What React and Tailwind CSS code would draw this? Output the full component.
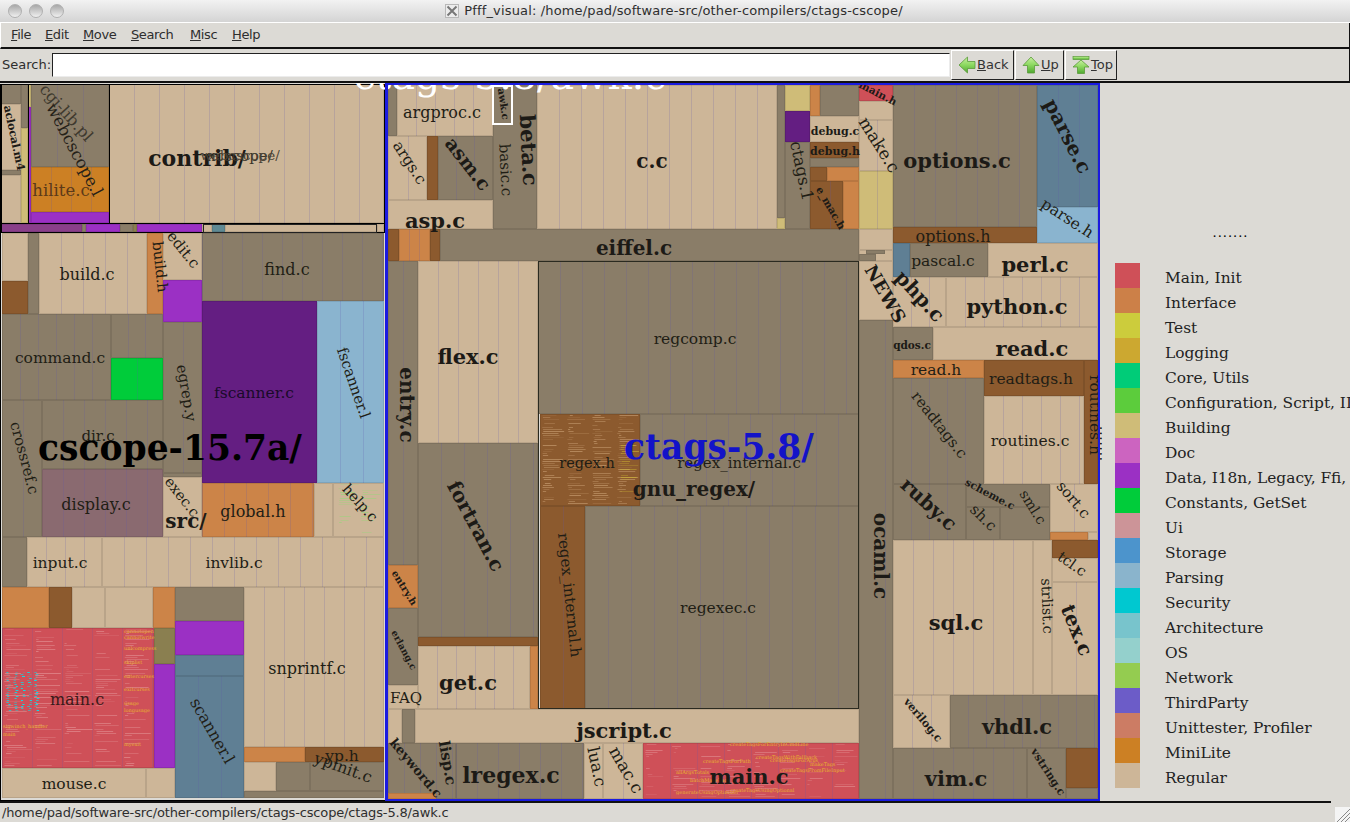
import React from "react";

const T = "#cdb698", G = "#8a7d68", B = "#8c5a2e", O = "#cc8448", P = "#9b30c4", DP = "#641e82", LB = "#8ab4cf", SL = "#5f7f94", GR = "#00cc3a", HO = "#cc8024", R = "#cf5058", Y = "#cfbc78", DI = "#8a6a70", OL = "#8a7f50", MP = "#8a3f8a", TE = "#5f8a94";

const rects = [
  [1,84,21,104,G],[1,104,21,170,T],[1,170,21,175,G],[1,175,21,223,T],[21,84,28,128,G],[21,128,28,223,Y],[28,84,31,107,Y],[28,107,31,223,P],
  [31,84,109,167,G,26],[31,167,109,212,HO,20],[31,212,109,223,P],[109,84,384,223,T,25],
  [1,224,82,232,MP],[82,224,86,232,G],[86,224,120,232,P],[120,224,133,232,G],[133,224,137,232,OL],[137,224,202,232,P],[202,224,212,232,T],[212,224,225,232,TE],[225,224,377,232,T],[377,224,384,232,T],
  [2,233,28,281,T],[2,281,28,314,B],[28,233,39,314,G],[39,233,147,314,T,22],[147,233,163,314,O],[163,233,202,280,T],[163,280,202,322,P],[202,233,384,301,G,20],
  [2,314,111,400,G,18],[111,314,163,358,G,17],[111,358,163,400,GR,26],[163,322,202,473,G,20],[163,473,202,477,G],[202,301,317,483,DP],[317,301,384,483,LB,23],
  [2,400,42,537,G,21],[42,400,163,469,G,21],[42,469,163,537,DI,21],[163,477,202,537,T],[202,483,314,537,O,22],[314,483,333,537,T],[333,483,384,537,T],
  [2,537,27,587,G],[27,537,102,587,T,19],[102,537,384,587,T,22],
  [2,587,49,628,O],[49,587,72,628,B],[72,587,105,628,T],[105,587,153,628,T],[153,587,175,628,O],[175,587,244,621,G],[175,621,244,655,P],[175,655,244,676,SL],[175,676,244,798,SL,23],
  [2,628,154,768,R,30],[154,628,175,664,OL],[154,664,175,768,P],[2,768,146,798,T],[146,768,175,798,T],
  [244,587,384,747,T,20],[244,747,305,762,O],[305,747,384,762,B],[244,762,276,791,T],[276,762,310,791,G],[310,762,384,791,G],[244,791,384,798,G],
  [388,85,397,136,G],[397,85,493,136,T,19],[493,85,537,229,G],[438,136,493,200,G,18],[388,136,427,200,T,20],[427,136,438,200,B],[388,200,493,229,T],
  [537,85,777,229,T,22],[777,85,785,218,G],[777,218,785,229,Y],[785,85,810,111,Y],[785,111,810,142,DP],[785,142,810,229,G],[810,85,820,116,O],[820,85,859,116,G],[810,116,859,142,T],[810,142,859,158,B],[810,158,859,167,G],
  [810,167,827,181,B],[827,167,859,181,O],[810,181,843,229,B,20],[843,181,859,229,O],
  [859,85,893,101,R],[859,101,893,120,T],[859,120,893,171,T,18],[859,171,893,229,Y,18],[859,229,893,250,T],[859,250,893,261,T],[866,250,885,254,G],[859,254,876,261,G],[859,261,893,320,T],
  [388,229,399,261,B],[399,229,430,261,O,10],[430,229,440,261,B],[440,229,859,261,G],
  [388,261,418,565,G,15],[388,565,418,608,O],[388,608,418,685,G],[388,685,418,709,T],[418,261,538,443,T,20],[418,443,538,637,G,23],[418,637,538,646,B],[418,646,530,709,T,19],[530,646,538,709,O],
  [538,261,859,414,G,22],[540,414,640,506,B],[640,414,859,506,G,22],[540,506,585,709,B,23],[585,506,859,709,G,23],
  [388,709,402,743,T],[402,709,415,743,G],[415,709,859,743,T],
  [388,743,456,799,G,16],[388,793,436,799,O],[456,743,584,799,G,21],[584,743,603,799,T],[603,743,643,799,T,20],[643,743,859,799,R,27],
  [859,320,893,799,G,26],
  [893,85,1037,227,G,21],[893,227,1037,243,B],[1037,85,1098,207,SL,21],[1037,207,1098,243,LB],
  [893,243,910,277,SL],[910,243,988,277,G],[988,243,1098,277,T],[893,277,946,327,T,18],[946,277,1098,327,T,19],[893,327,933,360,G],[933,327,1098,360,T],
  [893,360,984,378,O],[893,378,984,484,G,18],[984,360,1084,396,B],[1084,360,1098,484,B],[984,396,1084,484,T,19],
  [893,484,966,540,G,18],[966,484,1050,507,G],[966,507,1000,540,G],[1000,507,1050,540,G],[1050,484,1098,532,T,24],[1050,532,1088,540,O],[1088,532,1098,540,T],
  [893,540,1033,695,T,20],[1033,540,1052,695,T],[1052,540,1098,558,B],[1052,558,1098,582,T],[1052,582,1098,695,T,24],
  [893,695,950,748,T,19],[950,695,1098,748,G,18],[893,748,1027,799,G,20],[1027,748,1066,799,G],[1066,748,1098,788,B],[1066,788,1098,799,G],
];

const frames = [
  [0,84,386,801,"border-black"],[1,84,385,224,"border-black"],[28,84,110,224,"border-black"],[1,223,385,233,"border-black"],[203,224,377,233,"border-[#222]"],[538,261,859,709,"border-[#2a2a20]"],
  [492,85,513,125,"border-white border-2"],
];

const labels = [
  ["aclocal.m4",14,138,11,1,78],["cgi-lib.pl",66,113,16,0,48,"#3e392e"],["webcscope.l",74,150,16.5,0,62,"#252118"],["hilite.c",61,191,16.5,0,0,"#5c3a18"],
  ["contrib/",197,158,22,1,0],["xcscope/",240,156,15,0,0,"#3a342a"],["webcscope/",240,156,13.5,0,0,"#4a4436"],
  ["build.c",87,275,16],["build.h",160,267,14.5,0,84],["edit.c",183,250,15,0,51],["find.c",287,270,16],["command.c",60,359,15.5],
  ["egrep.y",186,393,15,0,80],["fscanner.c",254,394,15.5,0,0,"#1a0a2a"],["fscanner.l",353,383,15,0,71],["crossref.c",24,458,15,0,75],["dir.c",98,436,15],
  ["display.c",96,505,16],["exec.c",182,497,14.5,0,52],["global.h",253,512,16],["help.c",360,503,14.5,0,48],["input.c",60,564,15.5],["invlib.c",234,564,15.5],
  ["main.c",77,700,16,0,0,"#3a1a1a"],["scanner.l",212,731,16,0,60],["mouse.c",74,785,15.5],["snprintf.c",307,669,16],["yp.h",342,757,15.5],["ypinit.c",343,768,16,0,20],
  ["cscope-15.7a/",170,448,34.5,1,0,"#000"],["src/",186,521,20,1],
  ["argproc.c",442,113,16],["awk.c",503,104,10,1,82],["args.c",409,163,15.5,0,57],["asm.c",468,164,19,1,52],["basic.c",505,170,15,0,87],["beta.c",529,150,21,1,87],["asp.c",435,220,21,1],
  ["c.c",652,161,20,1],["ctags.1",801,171,16.5,0,78],["debug.c",835,131,11,1],["debug.h",835,151,11,1],["e_mac.h",831,208,10.5,1,60],["main.h",878,93,10.5,1,27],["make.c",879,145,17,0,58],
  ["options.c",957,160,21,1],["parse.c",1068,136,20,1,63],["parse.h",1067,219,15.5,0,33],["options.h",953,237,16],["eiffel.c",634,248,20,1],
  ["entry.c",407,405,20,1,90],["flex.c",468,356,21,1],["fortran.c",476,526,20,1,62],["get.c",468,682,21,1],["entry.h",404,588,10,1,58],["erlang.c",404,650,9.5,1,62],["FAQ",406,698,15],
  ["regcomp.c",695,340,15.5],["regex.h",587,463,14.5],["regex_internal.c",739,463,15],["gnu_regex/",694,489,20,1],["regex_internal.h",569,595,15,0,84],["regexec.c",718,609,15.5],
  ["jscript.c",624,730,21,1],["keyword.c",416,768,13,1,50],["lisp.c",447,763,15,1,80],["lregex.c",511,775,22,1],["lua.c",596,767,16.5,0,78],["mac.c",626,770,17,0,60],["main.c",749,776,21,1],
  ["ocaml.c",881,556,20,1,90],["NEWS",885,294,18,1,60],["php.c",920,296,20,1,47],["pascal.c",943,262,15.5],["perl.c",1035,264,21,1],["python.c",1017,306,21,1],["qdos.c",912,345,10.5,1],["read.c",1032,348,21,1],
  ["read.h",936,371,15.5],["readtags.h",1031,380,15.5],["routines.h",1094,415,15.5,0,90],["routines.c",1030,442,15.5],["readtags.c",939,425,15,0,52],["ruby.c",929,504,20,1,42],["scheme.c",990,494,10.5,1,28],
  ["sh.c",983,518,15,0,45],["sml.c",1033,507,14,0,58],["sort.c",1073,500,15,0,50],["tcl.c",1072,564,14.5,0,35],["strlist.c",1047,606,14.5,0,88],["tex.c",1077,630,20,1,68],["sql.c",956,622,21,1],
  ["verilog.c",923,720,11,1,50],["vhdl.c",1017,726,21,1],["vim.c",956,778,21,1],["vstring.c",1048,772,11,1,57],
];

const tiny = [
  ["cannotopen",124,629],["cannotwrite",124,635],["unlcompress",124,646],["skiplist",124,660],["entercurses",124,674],["exitcurses",124,687],["usage",124,701],["longusage",124,708],["myexit",124,742],
  ["sigwinch_handler",3,724],["main",3,732],
  ["createTagsForEntryInCmdLine",730,742],["createTagsForPath",703,759],["createTagsWithFallback",756,755],["createTagsForArgs",770,758],["createTagsFromFileInput",780,768],["allArgsTotals",676,770],["batchMakeTags",690,778],["generateUsingOptimizer",676,790],["createTagsUsingOptional",730,788],["makeTags",810,762],
];

function rng(seed) { let s = seed; return () => (s = (s * 1664525 + 1013904223) >>> 0) / 4294967296; }

function noise(x, y, w, h, col, lines, seed, cw, density) {
  const r = rng(seed);
  const out = [];
  for (let cx = 0; cx < w; cx += cw) {
    for (let ly = 0; ly < h; ly += 2) {
      if (r() > density) continue;
      const ll = 2 + r() * (cw - 6);
      out.push(<rect key={`${seed}-${cx}-${ly}`} x={cx + 2 + r() * 3} y={ly} width={ll} height={1} fill={col} opacity={0.1 + r() * lines} />);
    }
  }
  return <svg className="absolute pointer-events-none" width={w} height={h} style={{ left: x, top: y - 83 }}>{out}</svg>;
}

function Rect({ r }) {
  const [x0, y0, x1, y1, c, s] = r;
  const style = { left: x0, top: y0 - 83, width: x1 - x0, height: y1 - y0, backgroundColor: c };
  if (s) style.backgroundImage = `repeating-linear-gradient(90deg, transparent 0 ${s - 1}px, rgba(95,85,170,0.2) ${s - 1}px ${s}px)`;
  return <div className="absolute box-border border border-[#00000018]" style={style} />;
}

function Label({ l }) {
  const [t, x, y, size, bold, angle = 0, color] = l;
  return (
    <span
      className={`absolute whitespace-nowrap leading-none ${bold ? "font-bold" : "font-normal"}`}
      style={{ left: x, top: y - 83, fontSize: size, color: color || (bold ? "#1c1a16" : "#211d15"), transform: `translate(-50%,-50%) rotate(${angle}deg)` }}
    >
      {t}
    </span>
  );
}

function Arrow({ kind }) {
  const id = `g-${kind}`;
  const up = "M9 1 L17 9.5 L12.5 9.5 L12.5 17 L5.5 17 L5.5 9.5 L1 9.5 Z";
  const left = "M1 9 L9.5 1 L9.5 5.5 L17 5.5 L17 12.5 L9.5 12.5 L9.5 17 Z";
  return (
    <svg width="18" height="18" viewBox="0 0 18 18" className="shrink-0">
      <defs>
        <linearGradient id={id} x1="0" y1="0" x2="0" y2="1">
          <stop offset="0" stopColor="#c8f0a0" />
          <stop offset="0.5" stopColor="#8cd860" />
          <stop offset="1" stopColor="#4fa830" />
        </linearGradient>
      </defs>
      {kind === "top" && <rect x="1" y="0.5" width="16" height="3" fill={`url(#${id})`} stroke="#5a9a3a" strokeWidth="0.7" />}
      <path
        d={kind === "left" ? left : kind === "up" ? up : "M9 4 L17 11 L12.5 11 L12.5 17.5 L5.5 17.5 L5.5 11 L1 11 Z"}
        fill={`url(#${id})`}
        stroke="#5a9a3a"
        strokeWidth="0.8"
      />
    </svg>
  );
}

function Btn({ kind, mn, rest, cls }) {
  return (
    <button className={`h-[30px] flex items-center gap-[1px] pl-[6px] bg-[#dcdad5] border border-t-white border-l-white border-r-[#222] border-b-[#222] text-[13px] text-[#333] ${cls}`}>
      <Arrow kind={kind} />
      <span><u>{mn}</u>{rest}</span>
    </button>
  );
}

const legend = [
  ["#cf5058","Main, Init"],["#cc8048","Interface"],["#cccc3c","Test"],["#cca830","Logging"],["#00cc78","Core, Utils"],["#5ccc3c","Configuration, Script, IDL"],["#cfbc78","Building"],["#cc64c0","Doc"],["#9b30c4","Data, I18n, Legacy, Ffi, Gui"],["#00cc3a","Constants, GetSet"],
  ["#cc9498","Ui"],["#4c94cc","Storage"],["#8ab4cc","Parsing"],["#00c8d0","Security"],["#78c4cc","Architecture"],["#94d0cc","OS"],["#94cc50","Network"],["#6c5cc8","ThirdParty"],["#cc7c64","Unittester, Profiler"],["#cc8024","MiniLite"],["#cdb698","Regular"],
];

const menu = [
  ["F", "ile", "w-[34px]"], ["E", "dit", "w-[38px]"], ["M", "ove", "w-[48px]"], ["S", "earch", "w-[59px]"], ["M", "isc", "w-[42px]"], ["H", "elp", "w-[40px]"],
];

export default function App() {
  return (
    <div className="w-[1350px] h-[822px] overflow-hidden flex flex-col bg-[#dcdad5] font-['DejaVu_Sans',sans-serif] text-[13px] text-[#2e2e2e] relative">
      <div className="h-[23px] shrink-0 flex items-center relative bg-gradient-to-b from-[#f2f2f2] to-[#d4d4d4] border-b border-white">
        <div className="flex gap-[7px] pl-[8px]">
          {[0, 1, 2].map((i) => (
            <div key={i} className="w-[14px] h-[14px] rounded-full bg-gradient-to-b from-[#a8a8a8] to-[#f0f0f0] border border-[#b0b0b0]" />
          ))}
        </div>
        <div className="flex-1 flex justify-center items-center gap-[5px]">
          <svg width="14" height="14" viewBox="0 0 14 14">
            <rect x="0.5" y="0.5" width="13" height="13" fill="#ececec" stroke="#b8b8b8" />
            <path d="M2.5 2.5 L11.5 11.5 M11.5 2.5 L2.5 11.5" stroke="#777" strokeWidth="2" />
          </svg>
          <span className="whitespace-nowrap tracking-[0.15px]">Pfff_visual: /home/pad/software-src/other-compilers/ctags-cscope/</span>
        </div>
        <div className="w-[66px]" />
      </div>

      <div className="h-[26px] shrink-0 flex items-center pl-[10px] border-b-2 border-b-[#111] border-r border-r-[#111] border-l border-l-white">
        {menu.map(([a, b, w]) => (
          <span key={a + b} className={`${w} tracking-[-0.4px]`}><u>{a}</u>{b}</span>
        ))}
      </div>

      <div className="h-[34px] shrink-0 flex items-center pl-[2px] border-b-2 border-b-[#111] border-r border-r-[#111]">
        <span className="w-[50px]">Search:</span>
        <div className="w-[898px] h-[24px] bg-white border border-t-[#222] border-l-[#222] border-r-[#ececec] border-b-[#ececec]" />
        <div className="flex gap-[1px] ml-[1px]">
          <Btn kind="left" mn="B" rest="ack" cls="w-[63px]" />
          <Btn kind="up" mn="U" rest="p" cls="w-[49px]" />
          <Btn kind="top" mn="T" rest="op" cls="w-[52px]" />
        </div>
      </div>

      <div className="flex-1 flex relative overflow-hidden">
        <div className="relative w-[1100px] h-[718px] overflow-hidden font-['DejaVu_Serif',serif]">
          {rects.map((r, i) => <Rect key={i} r={r} />)}
          {noise(2, 629, 152, 138, "#eeb4b4", 0.35, 11, 30, 0.55)}
          {noise(643, 744, 216, 54, "#eeb4b4", 0.3, 23, 27, 0.4)}
          {noise(540, 415, 100, 90, "#dcb488", 0.4, 37, 25, 0.75)}
          {noise(336, 484, 46, 52, "#88e070", 0.45, 41, 22, 0.45)}
          {noise(4, 672, 36, 40, "#00e4ec", 0.9, 53, 7, 0.95)}
          {noise(617, 445, 22, 50, "#d0b830", 0.5, 61, 22, 0.6)}
          {frames.map(([a, b, c, d, cl], i) => (
            <div key={i} className={`absolute box-border border ${cl}`} style={{ left: a, top: b - 83, width: c - a, height: d - b }} />
          ))}
          {tiny.map(([t, x, y], i) => (
            <span key={i} className="absolute whitespace-nowrap text-[5px] leading-none text-[#e8b030]" style={{ left: x, top: y - 83 }}>{t}</span>
          ))}
          {labels.map((l, i) => <Label key={i} l={l} />)}
          <span className="absolute left-[719px] top-[364px] -translate-x-1/2 -translate-y-1/2 text-[34.5px] font-bold leading-none whitespace-nowrap text-[#1313c8]">ctags-5.8/</span>
          <span className="absolute left-[510px] top-[-7px] -translate-x-1/2 -translate-y-1/2 text-[39.6px] leading-none whitespace-nowrap text-white">ctags-5.8/awk.c</span>
          <div className="absolute left-[385px] top-0 w-[715px] h-[718px] box-border border-[#1a1ae0] border-t-2 border-r-2 border-b-2 border-l-[3px]" />
        </div>

        <div className="flex-1 relative font-['DejaVu_Serif',serif] text-[15.4px] text-[#222] overflow-hidden">
          <span className="absolute left-[113px] top-[147px] font-bold leading-none tracking-[2px] text-black text-[9px]">.......</span>
          <span className="absolute left-[-15px] top-[357px] rotate-90 font-bold leading-none tracking-[2px] text-black text-[9px]">.......</span>
          <div className="absolute left-[15px] top-[180px] flex flex-col">
            {legend.map(([c, t]) => (
              <div key={t} className="h-[25px] flex items-center gap-[25px] whitespace-nowrap">
                <div className="w-[25px] h-[25px]" style={{ backgroundColor: c }} />
                <span className="pt-[7px]">{t}</span>
              </div>
            ))}
          </div>
        </div>
      </div>

      <div className="h-[21px] shrink-0 relative flex items-center pl-[2px] border-t-2 border-t-[#111] w-[1331px]">
        <span className="whitespace-nowrap tracking-[-0.15px]">/home/pad/software-src/other-compilers/ctags-cscope/ctags-5.8/awk.c</span>
      </div>
      <svg className="absolute right-0 bottom-0" width="15" height="15" viewBox="0 0 15 15">
        <rect width="15" height="15" fill="#f4f4f4" />
        <path d="M15 2 L2 15 M15 6 L6 15 M15 10 L10 15" stroke="#888" strokeWidth="1" />
      </svg>
    </div>
  );
}
